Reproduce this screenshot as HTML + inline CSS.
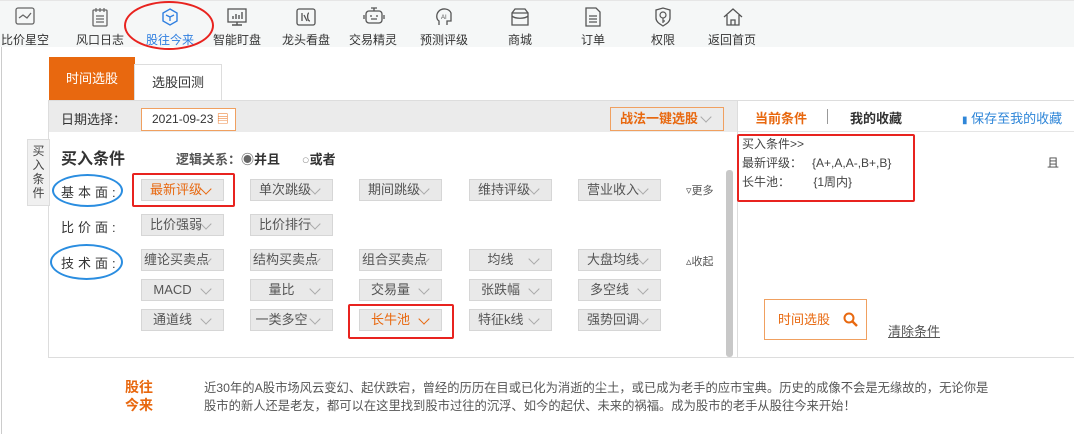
<!DOCTYPE html>
<html><head><meta charset="utf-8"><style>
*{margin:0;padding:0;box-sizing:border-box}
body{width:1074px;height:434px;overflow:hidden;background:#fff;font-family:"Liberation Sans","Noto Sans CJK SC",sans-serif;color:#333;position:relative;font-size:12px}
.a{position:absolute;white-space:nowrap}
.nav{position:absolute;left:0;top:0;width:1074px;height:47px;background:#f5f7f7;border-top:1px solid #e6e6e6}
.ni{position:absolute;top:0;width:70px;text-align:center}
.ni svg{position:absolute;left:25px;top:6px}
.ni span{position:absolute;top:30px;left:0;width:70px;font-size:12px;color:#333}
.btn{position:absolute;width:83px;height:22px;background:#e9e9e9;border:1px solid #d6d6d6;color:#555;font-size:13px;line-height:20px;padding-left:8px}
.btn:after,.chev:after{content:"";position:absolute;right:13px;top:5px;width:7px;height:7px;border-right:1px solid #aaa;border-bottom:1px solid #aaa;transform:rotate(45deg)}
.btn.c{text-align:center;padding-left:0;padding-right:20px}
.btn.o{color:#e8680f}.btn.o:after{border-color:#e8680f}
.red{position:absolute;border:2px solid #e8231f;border-radius:2px}
.ell{position:absolute;border:2px solid #2a8de0;border-radius:50%}
.lbl{position:absolute;font-size:13px;color:#333;letter-spacing:4px}
</style></head><body>
<div style="position:absolute;left:1px;top:47px;width:1px;height:387px;background:#ccc"></div>
<div class="nav">
<div class="ni" style="left:-10px"><svg width="20" height="18"><rect x="1" y="1" width="18" height="16" rx="2" fill="none" stroke="#666" stroke-width="1.3"/><path d="M4 11 L8 8 L12 11 L16 6" fill="none" stroke="#666" stroke-width="1.3"/></svg><span>比价星空</span></div>
<div class="ni" style="left:65px"><svg width="20" height="20"><rect x="3" y="3" width="14" height="16" rx="1" fill="none" stroke="#666" stroke-width="1.3"/><path d="M6 1v4M10 1v4M14 1v4M6 9h8M6 12h8M6 15h8" stroke="#666" stroke-width="1.2"/></svg><span>风口日志</span></div>
<div class="ni" style="left:135px"><svg width="20" height="20"><path d="M10 2 L17 6 L17 14 L10 18 L3 14 L3 6Z" fill="none" stroke="#2f7fe0" stroke-width="1.4"/><path d="M6 8 L10 10 L14 8 M10 10 V14" fill="none" stroke="#2f7fe0" stroke-width="1.3"/></svg><span style="color:#2f7fe0">股往今来</span></div>
<div class="ni" style="left:202px"><svg width="20" height="20"><rect x="1" y="2" width="18" height="13" fill="none" stroke="#555" stroke-width="1.3"/><path d="M6 12V9M9 12V7M12 12V8M15 12V5M10 15v3M5 18h10" stroke="#555" stroke-width="1.4"/></svg><span>智能盯盘</span></div>
<div class="ni" style="left:271px"><svg width="20" height="20"><rect x="1" y="2" width="18" height="16" rx="2" fill="none" stroke="#555" stroke-width="1.3"/><path d="M6 6v8M8 8l3 6M13 6c-2 0-2 8 1 8" fill="none" stroke="#555" stroke-width="1.3"/></svg><span>龙头看盘</span></div>
<div class="ni" style="left:338px"><svg width="22" height="20"><rect x="3" y="4" width="16" height="12" rx="3" fill="none" stroke="#555" stroke-width="1.3"/><path d="M8 1h6M11 1v3M8 8v2M14 8v2M8 12h6M1 8v4M21 8v4" stroke="#555" stroke-width="1.3"/></svg><span>交易精灵</span></div>
<div class="ni" style="left:409px"><svg width="20" height="20"><path d="M5 18v-4c-3-2-3-7 0-10 3-3 10-3 12 2v8h-4v4" fill="none" stroke="#555" stroke-width="1.3"/><text x="7" y="12" font-size="6" fill="#555" font-family="Liberation Sans">AI</text></svg><span>预测评级</span></div>
<div class="ni" style="left:485px"><svg width="20" height="20"><path d="M2 6h16v12H2z M2 6 L5 2 H15 L18 6 M2 9c3 3 13 3 16 0" fill="none" stroke="#555" stroke-width="1.3"/></svg><span>商城</span></div>
<div class="ni" style="left:558px"><svg width="20" height="20"><path d="M3 1h10l4 4v14H3z M6 9h8M6 12h8M6 15h8" fill="none" stroke="#555" stroke-width="1.3"/></svg><span>订单</span></div>
<div class="ni" style="left:628px"><svg width="20" height="20"><path d="M3 3 L10 1 L17 3 V11 C17 15 13 17 10 19 C7 17 3 15 3 11Z" fill="none" stroke="#555" stroke-width="1.3"/><circle cx="10" cy="8" r="3" fill="none" stroke="#555" stroke-width="1.2"/><path d="M10 11v5M10 14h2" stroke="#555" stroke-width="1.2"/></svg><span>权限</span></div>
<div class="ni" style="left:697px"><svg width="22" height="20"><path d="M2 10 L11 2 L20 10 M5 8V18H17V8 M9 18v-5h4v5" fill="none" stroke="#555" stroke-width="1.3"/></svg><span>返回首页</span></div>
</div>
<div style="position:absolute;left:49px;top:57px;width:86px;height:44px;background:#e8680f;color:#fff;font-size:13px;text-align:center;line-height:44px">时间选股</div>
<div style="position:absolute;left:134px;top:64px;width:88px;height:37px;border:1px solid #ddd;border-bottom:none;font-size:13px;text-align:center;line-height:36px;color:#333">选股回测</div>
<div style="position:absolute;left:48px;top:100px;width:1030px;height:258px;border:1px solid #ddd"></div>
<div style="position:absolute;left:49px;top:101px;width:688px;height:31px;background:#ebebeb"></div>
<div style="position:absolute;left:737px;top:101px;width:1px;height:256px;background:#ddd"></div>
<div style="position:absolute;left:738px;top:131px;width:336px;height:1px;background:#e5e5e5"></div>
<div style="position:absolute;left:726px;top:170px;width:7px;height:187px;background:#c8c8c8;border-radius:3px"></div>
<div class="a" style="left:61px;top:109px;font-size:13px;color:#333">日期选择：</div>
<div style="position:absolute;left:141px;top:108px;width:95px;height:23px;background:#fff;border:1px solid #f0a060;font-size:12px;line-height:21px;padding-left:10px;color:#333">2021-09-23 <span style="color:#e8680f">▤</span></div>
<div class="chev" style="position:absolute;left:610px;top:107px;width:114px;height:24px;border:1px solid #f0a060;color:#e8680f;font-weight:bold;font-size:13px;line-height:22px;padding-left:9px">战法一键选股</div>
<div style="position:absolute;left:27px;top:139px;width:23px;height:67px;background:#f0f0f0;border:1px solid #ddd;font-size:12px;line-height:14px;text-align:center;padding-top:4px;color:#444">买<br>入<br>条<br>件</div>
<div class="a" style="left:61px;top:145px;font-size:16px;font-weight:bold;color:#333">买入条件</div>
<div class="a" style="left:176px;top:149px;font-size:13px;color:#555;font-weight:bold">逻辑关系：<span style="color:#666">◉</span><span style="color:#333">并且</span>&nbsp;&nbsp;&nbsp;&nbsp;&nbsp;&nbsp;<span style="color:#999">○</span><span style="color:#333">或者</span></div>
<div class="lbl" style="left:61px;top:182px">基本面:</div>
<div class="lbl" style="left:61px;top:217px">比价面:</div>
<div class="lbl" style="left:61px;top:253px">技术面:</div>
<div class="ell" style="left:52px;top:174px;width:71px;height:33px"></div>
<div class="ell" style="left:50px;top:244px;width:73px;height:36px"></div>
<div class="btn o" style="left:141px;top:179px">最新评级</div>
<div class="btn" style="left:250px;top:179px">单次跳级</div>
<div class="btn" style="left:359px;top:179px">期间跳级</div>
<div class="btn" style="left:469px;top:179px">维持评级</div>
<div class="btn" style="left:578px;top:179px">营业收入</div>
<div class="a" style="left:686px;top:182px;font-size:11px;color:#555">▿更多</div>
<div class="btn" style="left:141px;top:214px">比价强弱</div>
<div class="btn" style="left:250px;top:214px">比价排行</div>
<div class="btn" style="left:141px;top:249px;padding-left:2px">缠论买卖点</div>
<div class="btn" style="left:250px;top:249px;padding-left:2px">结构买卖点</div>
<div class="btn" style="left:359px;top:249px;padding-left:2px">组合买卖点</div>
<div class="btn c" style="left:469px;top:249px">均线</div>
<div class="btn" style="left:578px;top:249px">大盘均线</div>
<div class="a" style="left:686px;top:253px;font-size:11px;color:#555">▵收起</div>
<div class="btn c" style="left:141px;top:279px">MACD</div>
<div class="btn c" style="left:250px;top:279px">量比</div>
<div class="btn c" style="left:359px;top:279px">交易量</div>
<div class="btn c" style="left:469px;top:279px">张跌幅</div>
<div class="btn c" style="left:578px;top:279px">多空线</div>
<div class="btn c" style="left:141px;top:309px">通道线</div>
<div class="btn c" style="left:250px;top:309px">一类多空</div>
<div class="btn c o" style="left:359px;top:309px">长牛池</div>
<div class="btn" style="left:469px;top:309px">特征k线</div>
<div class="btn" style="left:578px;top:309px">强势回调</div>
<div class="red" style="left:132px;top:173px;width:103px;height:34px"></div>
<div class="red" style="left:348px;top:304px;width:106px;height:35px"></div>
<div class="a" style="left:755px;top:108px;font-size:13px;color:#e8680f;font-weight:bold">当前条件</div>
<div style="position:absolute;left:827px;top:109px;width:1px;height:15px;background:#999"></div>
<div class="a" style="left:850px;top:108px;font-size:13px;color:#333;font-weight:bold">我的收藏</div>
<div class="a" style="left:962px;top:108px;font-size:13px;color:#2f86d8"><span style="font-size:10px">▮</span> 保存至我的收藏</div>
<div class="a" style="left:742px;top:135px;font-size:12px;line-height:19px;color:#444">买入条件&gt;&gt;<br>最新评级：&nbsp;&nbsp;&nbsp;{A+,A,A-,B+,B}<br>长牛池：&nbsp;&nbsp;&nbsp;&nbsp;&nbsp;&nbsp;&nbsp;{1周内}</div>
<div class="a" style="left:1047px;top:154px;font-size:12px;color:#444">且</div>
<div class="red" style="left:737px;top:134px;width:178px;height:68px"></div>
<div style="position:absolute;left:764px;top:299px;width:103px;height:41px;border:1px solid #f0a060;color:#e8680f;font-size:13px;line-height:39px;padding-left:13px">时间选股
<svg width="16" height="16" style="position:absolute;left:78px;top:12px"><circle cx="6" cy="6" r="4.5" fill="none" stroke="#e8680f" stroke-width="2"/><path d="M9.5 9.5 L14 14" stroke="#e8680f" stroke-width="2.4"/></svg></div>
<div class="a" style="left:888px;top:321px;font-size:13px;color:#555;text-decoration:underline">清除条件</div>
<div class="a" style="left:125px;top:378px;font-size:14px;font-weight:bold;color:#e8680f;line-height:18px">股往<br>今来</div>
<div class="a" style="left:204px;top:379px;font-size:12.3px;color:#555;line-height:18px">近30年的A股市场风云变幻、起伏跌宕，曾经的历历在目或已化为消逝的尘土，或已成为老手的应市宝典。历史的成像不会是无缘故的，无论你是<br>股市的新人还是老友，都可以在这里找到股市过往的沉浮、如今的起伏、未来的祸福。成为股市的老手从股往今来开始！</div>
<div style="position:absolute;left:124px;top:1px;width:90px;height:49px;border:2px solid #e8231f;border-radius:50%"></div>
</body></html>
